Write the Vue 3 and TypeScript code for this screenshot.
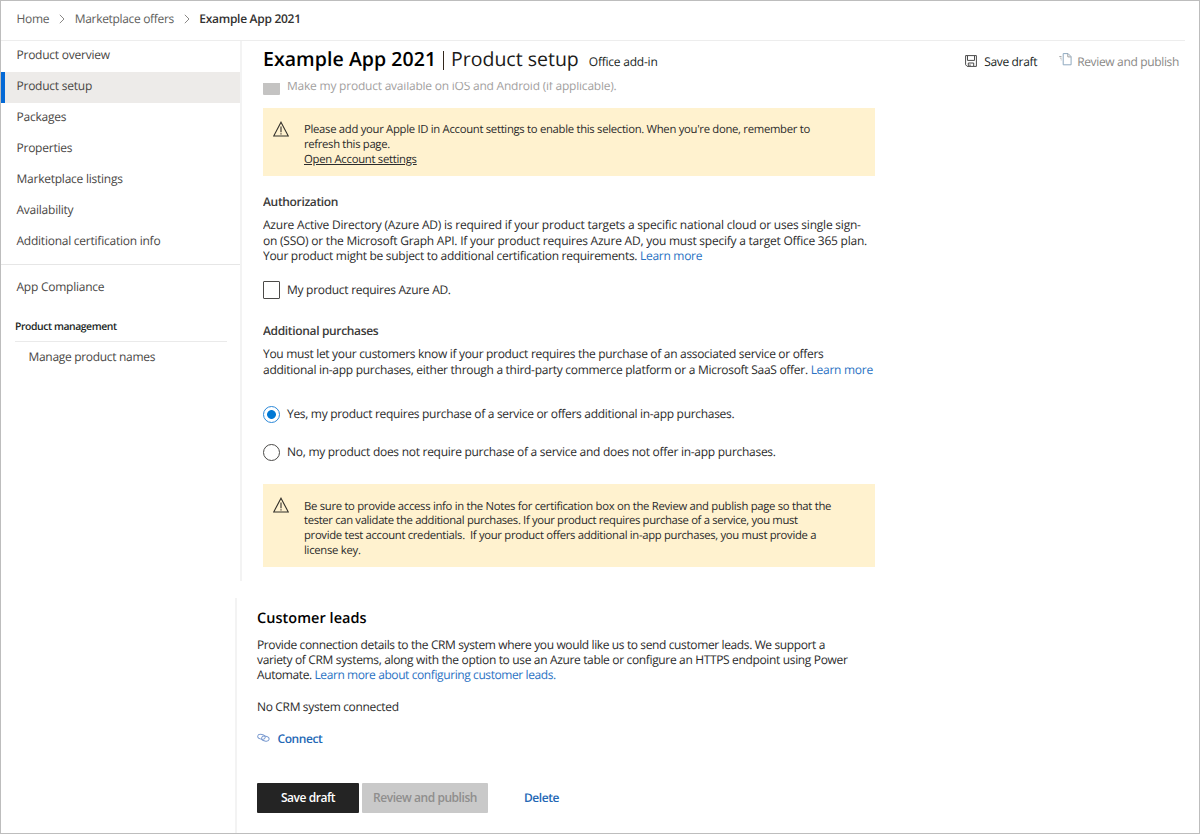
<script setup lang="ts">
import { ref } from 'vue'

const navItems: string[] = [
  'Product overview',
  'Product setup',
  'Packages',
  'Properties',
  'Marketplace listings',
  'Availability',
  'Additional certification info',
]
const activeItem = ref('Product setup')
const purchases = ref<'yes' | 'no'>('yes')
const requiresAzure = ref(false)
</script>

<template>
  <div class="window">
    <header class="crumbs">
      <a class="crumb c1">Home</a>
      <svg class="chev" viewBox="0 0 6 10"><path d="M.8.8 5 5 .8 9.2" /></svg>
      <a class="crumb c2">Marketplace offers</a>
      <svg class="chev" viewBox="0 0 6 10"><path d="M.8.8 5 5 .8 9.2" /></svg>
      <span class="crumb current">Example App 2021</span>
    </header>

    <div class="upper">
      <nav class="sidebar">
        <a
          v-for="item in navItems"
          :key="item"
          class="nav-item"
          :class="{ active: item === activeItem }"
          @click="activeItem = item"
        >{{ item }}</a>
        <div class="divider"></div>
        <a class="nav-item compliance">App Compliance</a>
        <div class="group-title">Product management</div>
        <a class="nav-item sub">Manage product names</a>
      </nav>

      <main class="content">
        <div class="title-row">
          <h1><b>Example App 2021</b><i class="bar"></i><span class="page">Product setup</span></h1>
          <span class="kind">Office add-in</span>
          <div class="actions">
            <a class="action save">
              <svg class="disk" viewBox="0 0 12 12"><path class="frame" d="M.6.6h10.8v10.8H2.2L.6 9.8z" /><path d="M2.5.8v4.6h7V.8M3.3 11.2V8h5.4v3.2M5 9.4v1.8" /></svg>
              <span>Save draft</span>
            </a>
            <a class="action publish">
              <svg class="pages" viewBox="0 0 13 13"><path class="blue" d="M4.2.6h4.9l3 3v8.2H4.2z" /><path d="M8.8.8v3.1h3.1M.3 3.6h2.2M1.3 5.2h1.2M1.8 6.9h.7" /></svg>
              <span>Review and publish</span>
            </a>
          </div>
        </div>

        <div class="scroll">
          <div class="mobile-row">
            <span class="disabled-box"></span>
            <span class="mobile-label">Make my product available on iOS and Android (if applicable).</span>
          </div>

          <section class="notice n1">
            <svg class="warn" viewBox="0 0 16 16"><path d="M8 1.2 15.3 15H.7zM8 5.4v5.8M8 12.2v1.2" /></svg>
            <p>
              <span class="line a1">Please add your Apple ID in Account settings to enable this selection. When you're done, remember to</span>
              <span class="line a2">refresh this page.</span>
              <a class="line under">Open Account settings</a>
            </p>
          </section>

          <h2 class="auth">Authorization</h2>
          <p class="para">
            <span class="line b1">Azure Active Directory (Azure AD) is required if your product targets a specific national cloud or uses single sign-</span>
            <span class="line b2">on (SSO) or the Microsoft Graph API. If your product requires Azure AD, you must specify a target Office 365 plan.</span>
            <span class="line b3">Your product might be subject to additional certification requirements. <a class="link">Learn more</a></span>
          </p>
          <div class="choice azure" @click="requiresAzure = !requiresAzure">
            <span class="box" :class="{ checked: requiresAzure }"></span>
            <span class="azure-label">My product requires Azure AD.</span>
          </div>

          <h2 class="purch">Additional purchases</h2>
          <p class="para">
            <span class="line p1">You must let your customers know if your product requires the purchase of an associated service or offers</span>
            <span class="line p2">additional in-app purchases, either through a third-party commerce platform or a Microsoft SaaS offer. <a class="link">Learn more</a></span>
          </p>
          <div class="choice yes" @click="purchases = 'yes'">
            <span class="radio" :class="{ on: purchases === 'yes' }"></span>
            <span class="yes-label">Yes, my product requires purchase of a service or offers additional in-app purchases.</span>
          </div>
          <div class="choice no" @click="purchases = 'no'">
            <span class="radio" :class="{ on: purchases === 'no' }"></span>
            <span class="no-label">No, my product does not require purchase of a service and does not offer in-app purchases.</span>
          </div>

          <section class="notice n2">
            <svg class="warn" viewBox="0 0 16 16"><path d="M8 1.2 15.3 15H.7zM8 5.4v5.8M8 12.2v1.2" /></svg>
            <p>
              <span class="line d1">Be sure to provide access info in the Notes for certification box on the Review and publish page so that the</span>
              <span class="line d2">tester can validate the additional purchases. If your product requires purchase of a service, you must</span>
              <span class="line d3">provide test account credentials.&nbsp; If your product offers additional in-app purchases, you must provide a</span>
              <span class="line d4">license key.</span>
            </p>
          </section>
        </div>
      </main>
    </div>

    <section class="leads">
      <h3>Customer leads</h3>
      <p class="para">
        <span class="line e1">Provide connection details to the CRM system where you would like us to send customer leads. We support a</span>
        <span class="line e2">variety of CRM systems, along with the option to use an Azure table or configure an HTTPS endpoint using Power</span>
        <span class="line e3">Automate. <a class="link">Learn more about configuring customer leads.</a></span>
      </p>
      <div class="status">No CRM system connected</div>
      <a class="connect">
        <svg viewBox="0 0 14 10"><ellipse cx="4.8" cy="3.7" rx="4.1" ry="2.6" transform="rotate(12 4.8 3.7)" /><ellipse cx="9" cy="5.7" rx="4.1" ry="2.6" transform="rotate(12 9 5.7)" /></svg>
        <span>Connect</span>
      </a>
      <div class="buttons">
        <button class="dark">Save draft</button>
        <button class="grey" disabled>Review and publish</button>
        <a class="delete">Delete</a>
      </div>
    </section>
  </div>
</template>

<style>
body {
  margin: 0;
  background: #fff;
}
</style>

<style scoped>
.window {
  box-sizing: border-box;
  width: 1200px;
  height: 834px;
  border: 1px solid #bdbdbd;
  background: #fff;
  overflow: hidden;
  font-family: 'Open Sans', 'Noto Sans', sans-serif;
  font-size: 12px;
  letter-spacing: -0.28px;
  text-rendering: geometricPrecision;
  color: #2b2b2b;
}
h1, h2, h3, p {
  margin: 0;
}
.crumbs {
  display: flex;
  align-items: center;
  width: 1184px;
  height: 40px;
  box-sizing: border-box;
  padding: 0 0 5px 15.5px;
  border-bottom: 1px solid #ededed;
  color: #605e5c;
  white-space: nowrap;
}
.chev {
  width: 6px;
  height: 10px;
  margin: 1px 9.5px 0 10px;
  fill: none;
  stroke: #8a8886;
  stroke-width: 1;
}
.c2 {
  letter-spacing: -0.33px;
}
.current {
  font-weight: 600;
  letter-spacing: -0.29px;
  color: #323130;
}
.upper {
  display: flex;
  height: 540px;
}
.sidebar {
  flex: none;
  width: 239px;
  border-right: 2px solid #f3f3f3;
}
.nav-item {
  display: block;
  box-sizing: border-box;
  height: 31px;
  line-height: 28px;
  padding-left: 15.5px;
  letter-spacing: -0.24px;
  color: #484644;
}
.nav-item.active {
  border-left: 4px solid #0469d6;
  padding-left: 11.5px;
  background: #edebe9;
}
.divider {
  height: 1px;
  margin-top: 6px;
  background: #e6e6e6;
}
.compliance {
  margin-top: 8px;
}
.group-title {
  box-sizing: border-box;
  width: 212px;
  height: 27px;
  margin: 11px 0 0 14px;
  line-height: 24px;
  font-size: 10.4px;
  font-weight: 600;
  letter-spacing: -0.42px;
  color: #201f1e;
  border-bottom: 1px solid #eaeaea;
}
.nav-item.sub {
  padding-left: 27.5px;
  line-height: 29px;
  letter-spacing: -0.31px;
}
.content {
  flex: 1;
  min-width: 0;
  padding-left: 21px;
}
.title-row {
  display: flex;
  align-items: baseline;
  height: 41px;
  white-space: nowrap;
  color: #201f1e;
}
h1 {
  font-size: 19.5px;
  line-height: 36px;
  font-weight: 400;
  letter-spacing: 0;
  color: #1b1a19;
}
h1 b {
  font-weight: 600;
  letter-spacing: 0.06px;
  color: #000;
}
.bar {
  display: inline-block;
  width: 1px;
  height: 19px;
  margin: 0 7.5px 0 6.3px;
  vertical-align: -4px;
  background: #33271c;
}
.kind {
  margin-left: 10px;
  letter-spacing: -0.22px;
}
.actions {
  display: flex;
  margin-left: auto;
  padding-right: 20px;
  letter-spacing: -0.34px;
  transform: translateY(1px);
}
.action {
  display: flex;
  align-items: center;
}
.action svg {
  fill: none;
  stroke: #4a4a4a;
  stroke-width: 1;
}
.disk {
  width: 12px;
  height: 12px;
  margin-right: 7px;
}
.publish {
  margin-left: 22px;
  color: #8a8886;
}
.action .pages {
  width: 13px;
  height: 13px;
  margin: -3px 5px 0 0;
  stroke: #a0a0a0;
}
.pages .blue {
  stroke: #8fa9bf;
}
.scroll {
  height: 499px;
  overflow: hidden;
}
.mobile-row {
  display: flex;
  align-items: flex-start;
  height: 26px;
  letter-spacing: -0.22px;
  color: #a3a19f;
}
.disabled-box {
  width: 17px;
  height: 12px;
  margin: 1px 7px 0 0;
  background: #c4c3c2;
  border-radius: 0 0 1px 1px;
}
.mobile-label {
  line-height: 16px;
  margin-top: -4px;
}
.notice {
  display: flex;
  box-sizing: border-box;
  width: 611.5px;
  background: #fff2cf;
  font-size: 11.3px;
  line-height: 14.7px;
}
.warn {
  flex: none;
  width: 16px;
  height: 16px;
  margin: 13px 15px 0 10px;
  fill: none;
  stroke: #33302a;
  stroke-width: 1.1;
}
.notice p {
  padding-top: 15.2px;
}
.n1 {
  height: 68px;
}
.n2 {
  height: 83px;
  margin-top: 23px;
}
.notice.n2 p {
  padding-top: 15.6px;
}
.line {
  display: block;
  white-space: nowrap;
}
.a1 { letter-spacing: -0.3px; }
.a2 { letter-spacing: -0.33px; }
.b1 { letter-spacing: -0.215px; }
.b2 { letter-spacing: -0.232px; }
.b3 { letter-spacing: -0.29px; }
.p1 { letter-spacing: -0.31px; }
.p2 { letter-spacing: -0.283px; }
.d1 { letter-spacing: -0.3px; }
.d2 { letter-spacing: -0.352px; }
.d3 { letter-spacing: -0.32px; }
.e1 { letter-spacing: -0.378px; }
.e2 { letter-spacing: -0.345px; }
.e3 { letter-spacing: -0.405px; }
.yes-label { letter-spacing: -0.308px; }
.no-label { letter-spacing: -0.275px; }
.under {
  text-decoration: underline;
}
h2 {
  font-size: 12px;
  line-height: 16px;
  font-weight: 600;
  letter-spacing: -0.34px;
  color: #3b3a39;
}
.auth {
  margin-top: 18px;
}
.para {
  margin-top: 7px;
  line-height: 15.5px;
}
.link {
  color: #2a72c3;
}
.choice {
  display: flex;
  align-items: center;
  height: 18px;
  gap: 7px;
}
.box,
.radio {
  box-sizing: border-box;
  width: 17px;
  height: 18px;
  border: 1px solid #4b4a48;
  border-radius: 1px;
}
.checked {
  background: #0078d4;
}
.radio {
  height: 17px;
  border-radius: 50%;
}
.radio.on {
  border-color: #2b88d8;
  background: radial-gradient(circle, #0078d4 4px, #fff 4.8px);
}
.azure-label,
.yes-label,
.no-label {
  margin-top: -1px;
}
.azure {
  margin-top: 17.5px;
}
.purch {
  margin-top: 24px;
}
.yes {
  margin-top: 28px;
}
.no {
  margin-top: 20px;
}
.leads {
  box-sizing: border-box;
  height: 235px;
  margin: 17px 0 0 234px;
  padding: 11px 0 0 20px;
  border-left: 2px solid #f3f3f3;
}
h3 {
  font-size: 14.5px;
  line-height: 20px;
  font-weight: 600;
  letter-spacing: 0.04px;
  color: #000;
}
.leads .para {
  margin-top: 7.5px;
  line-height: 15.3px;
}
.status {
  margin-top: 16.6px;
  line-height: 16px;
  letter-spacing: -0.34px;
}
.connect {
  display: flex;
  align-items: center;
  height: 16px;
  margin-top: 16px;
  color: #2468b5;
  font-weight: 600;
}
.connect span {
  letter-spacing: -0.42px;
}
.connect svg {
  width: 13px;
  height: 10px;
  margin: -2px 7.5px 0 0;
  fill: none;
  stroke: #7b9bd0;
  stroke-width: 1;
}
.buttons {
  display: flex;
  align-items: center;
  margin-top: 36px;
  letter-spacing: -0.43px;
}
button {
  height: 30px;
  padding: 0;
  border: 0;
  border-radius: 1px;
  font: 600 12px 'Open Sans', 'Noto Sans', sans-serif;
  letter-spacing: -0.45px;
}
.dark {
  width: 102px;
  background: #242424;
  color: #fff;
}
.grey {
  width: 126px;
  margin-left: 3px;
  background: #c9c9c9;
  color: #8f8e8d;
}
.delete {
  margin-left: 36px;
  font-weight: 600;
  color: #2468b5;
}
</style>
